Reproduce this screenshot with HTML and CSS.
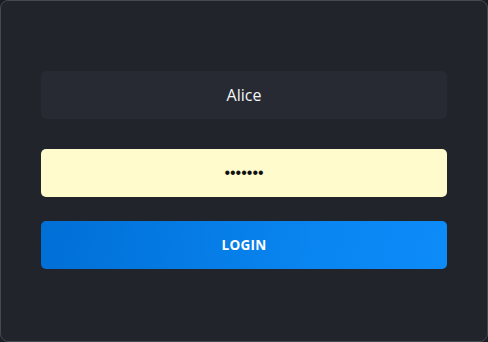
FILE: index.html
```html
<!DOCTYPE html>
<html lang="en">
<head>
<meta charset="utf-8">
<title>Login</title>
<link rel="stylesheet" href="styles.css">
</head>
<body>
<div class="card">
  <form class="form">
    <div class="field field-user">Alice</div>
    <div class="field field-pass">•••••••</div>
    <button type="button" class="btn">LOGIN</button>
  </form>
</div>
</body>
</html>
```

FILE: styles.css
```css
html, body {
  margin: 0;
  padding: 0;
  background: #1b1d22;
}
.card {
  box-sizing: border-box;
  width: 488px;
  height: 342px;
  border: 1px solid #464950;
  border-radius: 8px;
  background: #21242b;
  padding: 70px 40px 0 40px;
}
.form {
  display: flex;
  flex-direction: column;
}
.field {
  height: 48px;
  border-radius: 5px;
  display: flex;
  align-items: center;
  justify-content: center;
  font-family: "Open Sans", sans-serif;
  font-size: 16px;
}
.field-user {
  background: #272a32;
  color: #f4f5f7;
}
.field-pass {
  margin-top: 30px;
  background: #fffbcd;
  color: #111111;
  font-family: "Liberation Sans", sans-serif;
  font-size: 16px;
}
.btn {
  margin-top: 24px;
  height: 48px;
  border: 0;
  border-radius: 5px;
  background: linear-gradient(100deg, #006fd6 0%, #0a86f2 70%, #0d8bf8 100%);
  color: #ffffff;
  font-family: "Open Sans", sans-serif;
  font-weight: 700;
  font-size: 13.5px;
  letter-spacing: 0.3px;
  padding: 0;
}
```
